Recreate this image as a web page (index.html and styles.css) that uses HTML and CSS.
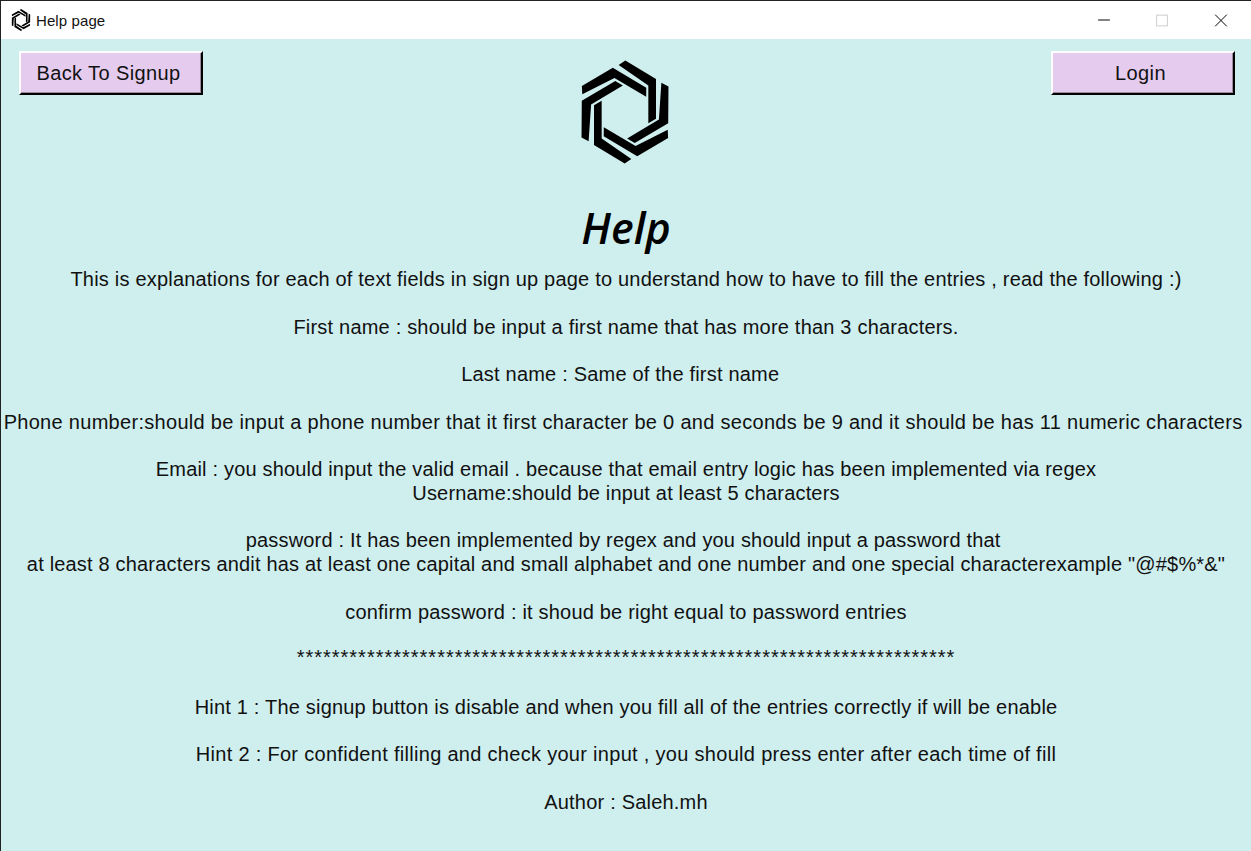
FILE: index.html
```html
<!DOCTYPE html>
<html lang="en">
<head>
<meta charset="utf-8">
<title>Help page</title>
<link rel="stylesheet" href="styles.css">
</head>
<body>
<svg class="defs" width="0" height="0" aria-hidden="true">
  <defs>
    <g id="hex" transform="scale(1,1.03)">
      <polygon id="band" points="-19,-137 1,-150 93,-96 93,20 70,33 70,-77"/>
      <use href="#band" transform="rotate(60)"/>
      <use href="#band" transform="rotate(120)"/>
      <use href="#band" transform="rotate(180)"/>
      <use href="#band" transform="rotate(240)"/>
      <use href="#band" transform="rotate(300)"/>
    </g>
  </defs>
</svg>
<div class="window">
  <header class="titlebar">
    <svg class="title-icon" viewBox="-156 -156 312 312"><use href="#hex"/></svg>
    <span class="title-text">Help page</span>
    <div class="controls">
      <svg class="ctl" viewBox="0 0 58 39"><path d="M23 19.5h12" stroke="#000" fill="none"/></svg>
      <svg class="ctl" viewBox="0 0 58 39"><rect x="23.5" y="14.5" width="11" height="11" stroke="#ccc" fill="none"/></svg>
      <svg class="ctl" viewBox="0 0 58 39"><path d="M24 14l12 12M36 14l-12 12" stroke="#000" fill="none"/></svg>
    </div>
  </header>
  <main class="content">
    <div class="top">
      <button class="btn">Back To Signup</button>
      <svg class="logo" viewBox="-132 -156 264 312"><use href="#hex"/></svg>
      <button class="btn">Login</button>
    </div>
    <h1 class="heading">Help</h1>
    <div class="text">
      <p>This is explanations for each of text fields in sign up page to understand how to have to fill the entries , read the following :)</p>
      <p>First name : should be input a first name that has more than 3 characters.</p>
      <p>Last name : Same of the first name  </p>
      <p class="wide">Phone number:should be input a phone number that it first character be 0 and seconds be 9 and it should be has 11 numeric characters </p>
      <p class="tight">Email : you should input the valid email . because that email entry logic has been implemented via regex<br>Username:should be input at least 5 characters</p>
      <p class="tight">password : It has been implemented by regex and you should input a password that <br>at least 8 characters andit has at least one capital and small alphabet and one number and one special characterexample "@#$%*&amp;"</p>
      <p>confirm password : it shoud be right equal to password entries</p>
      <p class="stars">***************************************************************************</p>
      <p>Hint 1 : The signup button is disable and when you fill all of the entries correctly if will be enable</p>
      <p class="wide">Hint 2 : For confident filling and check your input , you should press enter after each time of fill</p>
      <p>Author : Saleh.mh</p>
    </div>
  </main>
</div>
</body>
</html>
```
FILE: styles.css
```css
* { box-sizing: border-box; }
html, body { margin: 0; padding: 0; }
body { width: 1251px; height: 851px; overflow: hidden; background: #cfeeee; font-family: "Liberation Sans", Arial, sans-serif; color: #000; }
.defs { position: absolute; }
.window { width: 1251px; height: 851px; display: flex; flex-direction: column; border-top: 1px solid #222; border-left: 1px solid #222; }
.titlebar { height: 38px; background: #fff; display: flex; align-items: center; flex: none; }
.title-icon { width: 22px; height: 22px; margin-left: 9px; flex: none; }
.title-text { margin-left: 4px; font-size: 15px; letter-spacing: .1px; font-family: "Liberation Sans", Arial, sans-serif; color: #111; }
.controls { margin-left: auto; padding-right: 2px; display: flex; }
.ctl { width: 58px; height: 38px; display: block; }
.content { flex: 1; display: flex; flex-direction: column; background: #cfeeee; }
.top { display: flex; justify-content: space-between; align-items: flex-start; padding: 12px 16px 0 18px; height: 158px; }
.btn { width: 184px; height: 44px; background: #e5cbee; border: 2px solid; border-color: #fff #000 #000 #fff; box-shadow: inset -1px -1px 0 #9a8ba0; font: 20px "Liberation Sans", Arial, sans-serif; letter-spacing: .4px; color: #111; padding: 0 5px 0 0; }
.logo { width: 88px; height: 104px; margin: 9px 5px 0 0; }
.heading { margin: 0; height: 71px; text-align: center; font: italic 600 43px/62px "Open Sans", sans-serif; }
.text { text-align: center; font-size: 20px; line-height: 23.75px; letter-spacing: .2px; color: #111; }
.text p { margin: 0 0 23.75px; white-space: pre; }
.text .wide { letter-spacing: .3px; }
.text .tight { letter-spacing: .18px; }
.text .stars { margin: -2px 0 26px; letter-spacing: 1px; }
```
